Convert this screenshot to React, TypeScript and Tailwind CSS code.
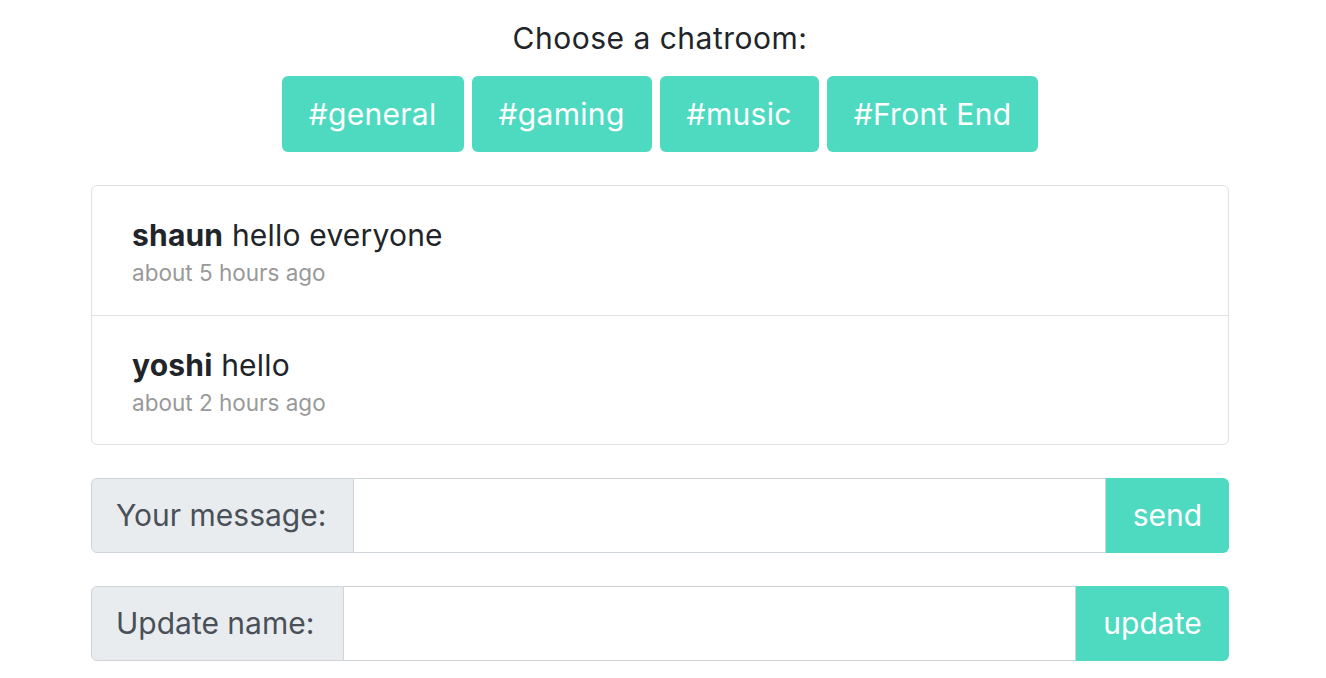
import React from 'react';

const rooms = ['#general', '#gaming', '#music', '#Front End'];

const messages = [
  { name: 'shaun', text: 'hello everyone', time: 'about 5 hours ago' },
  { name: 'yoshi', text: 'hello', time: 'about 2 hours ago' },
];

const App: React.FC = () => {
  return (
    <div className="min-h-[678px] bg-white text-[#212529]" style={{ fontFamily: 'Inter, "Noto Sans", sans-serif' }}>
      <div className="w-[1138px] ml-[91px] pt-[16px]">
        {/* Room picker */}
        <div className="text-center text-[30px] tracking-[0.5px] leading-[44px]">Choose a chatroom:</div>
        <div className="flex justify-center gap-2 mt-[16px]">
          {rooms.map(r => (
            <button
              key={r}
              className="h-[76px] px-[27px] rounded-[6px] bg-[#4ed9c1] text-white text-[30px] tracking-[0.3px] leading-none"
            >
              {r}
            </button>
          ))}
        </div>

        {/* Chat window */}
        <div className="mt-[33px] border border-[#dee2e6] rounded-[6px]">
          {messages.map((m, i) => (
            <div key={m.name} className={`h-[129px] px-[40px] pt-[30px] ${i > 0 ? 'border-t border-[#dee2e6]' : ''}`}>
              <div className="text-[30px] leading-[38px] tracking-[0.2px]">
                <span className="font-bold">{m.name}</span> {m.text}
              </div>
              <div className="text-[22.5px] leading-[30px] mt-[4px] text-[#999999]">{m.time}</div>
            </div>
          ))}
        </div>

        {/* Forms */}
        <div className="flex mt-[33px] h-[75px]">
          <div className="flex items-center px-[24px] w-[263px] bg-[#e9ecef] border border-[#ced4da] rounded-l-[6px] text-[#495057] text-[30px]">
            Your message:
          </div>
          <input className="flex-1 border border-l-0 border-[#ced4da] outline-none px-4 text-[30px]" />
          <button className="w-[123px] bg-[#4ed9c1] text-white text-[30px] rounded-r-[6px]">send</button>
        </div>

        <div className="flex mt-[33px] h-[75px]">
          <div className="flex items-center px-[24px] w-[253px] bg-[#e9ecef] border border-[#ced4da] rounded-l-[6px] text-[#495057] text-[30px]">
            Update name:
          </div>
          <input className="flex-1 border border-l-0 border-[#ced4da] outline-none px-4 text-[30px]" />
          <button className="w-[153px] bg-[#4ed9c1] text-white text-[30px] rounded-r-[6px]">update</button>
        </div>
      </div>
    </div>
  );
};

export default App;
